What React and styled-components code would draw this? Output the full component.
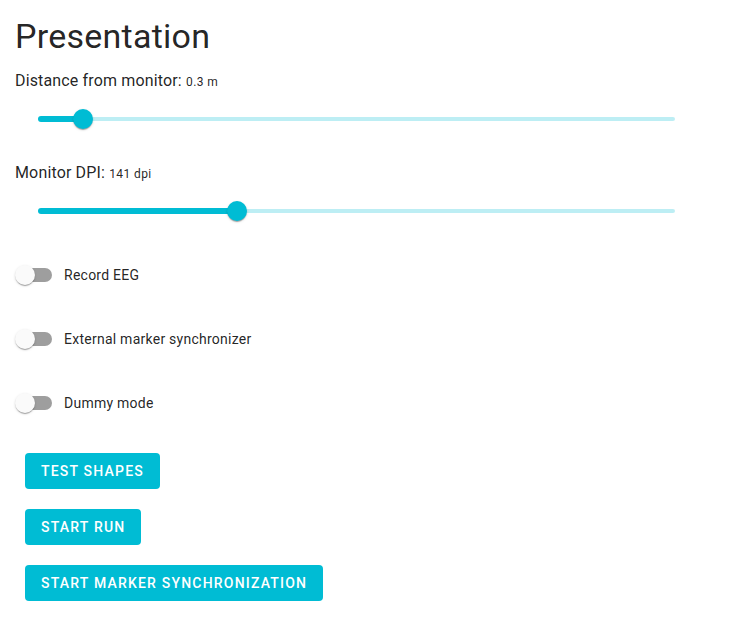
import { useState } from 'react';
import styled, { createGlobalStyle } from 'styled-components';

const GlobalStyle = createGlobalStyle`
  body {
    margin: 0;
    background: #fff;
    font-family: Roboto, 'Liberation Sans', sans-serif;
    color: rgba(0, 0, 0, 0.87);
  }
`;

const PRIMARY = '#00bcd4';

const Page = styled.div`
  padding: 15px 15px 24px;
  display: flex;
  flex-direction: column;
`;

const Title = styled.h1`
  margin: 0;
  font-size: 34px;
  line-height: 42px;
  font-weight: 400;
  letter-spacing: 0.25px;
`;

const Label = styled.div`
  margin-top: ${(p) => p.$top}px;
  font-size: 16px;
  line-height: 24px;
  letter-spacing: 0.15px;
`;

const Value = styled.span`
  font-size: 12px;
  letter-spacing: 0.4px;
`;

const SliderRoot = styled.div`
  position: relative;
  margin: 10px 0 0 24px;
  width: 636px;
  height: 30px;
  cursor: pointer;
`;

const Rail = styled.div`
  position: absolute;
  left: 0;
  right: 0;
  top: 13px;
  height: 4px;
  border-radius: 2px;
  background: rgba(0, 188, 212, 0.26);
`;

const Track = styled.div`
  position: absolute;
  left: -1px;
  top: 12px;
  height: 6px;
  border-radius: 3px;
  background: ${PRIMARY};
`;

const Thumb = styled.div`
  position: absolute;
  top: 5px;
  width: 20px;
  height: 20px;
  margin-left: -10px;
  border-radius: 50%;
  background: ${PRIMARY};
  box-shadow: 0 2px 1px -1px rgba(0, 0, 0, 0.2), 0 1px 1px 0 rgba(0, 0, 0, 0.14),
    0 1px 3px 0 rgba(0, 0, 0, 0.12);
`;

const SwitchList = styled.div`
  margin-top: 30px;
  display: flex;
  flex-direction: column;
  gap: 26px;
`;

const SwitchRow = styled.label`
  display: flex;
  align-items: center;
  margin-left: -9px;
  height: 38px;
  cursor: pointer;
`;

const SwitchBox = styled.span`
  position: relative;
  width: 58px;
  height: 38px;
  flex-shrink: 0;
`;

const SwitchTrack = styled.span`
  position: absolute;
  left: 11px;
  top: 12px;
  width: 35px;
  height: 14px;
  border-radius: 7px;
  background: ${(p) => (p.$on ? 'rgba(0, 188, 212, 0.5)' : 'rgba(0, 0, 0, 0.38)')};
`;

const SwitchThumb = styled.span`
  position: absolute;
  top: 9px;
  left: ${(p) => (p.$on ? 29 : 9)}px;
  width: 20px;
  height: 20px;
  border-radius: 50%;
  background: ${(p) => (p.$on ? PRIMARY : '#fafafa')};
  box-shadow: 0 2px 1px -1px rgba(0, 0, 0, 0.2), 0 1px 1px 0 rgba(0, 0, 0, 0.14),
    0 1px 3px 0 rgba(0, 0, 0, 0.12);
`;

const SwitchText = styled.span`
  margin-left: 0;
  font-size: 14px;
  line-height: 20px;
  letter-spacing: 0.25px;
`;

const ButtonList = styled.div`
  margin: 31px 0 0 10px;
  display: flex;
  flex-direction: column;
  align-items: flex-start;
  gap: 20px;
`;

const Button = styled.button`
  height: 36px;
  padding: 0 16px;
  border: none;
  border-radius: 4px;
  background: ${PRIMARY};
  color: #fff;
  font-family: Roboto, 'Liberation Sans', sans-serif;
  font-size: 14px;
  font-weight: 500;
  letter-spacing: 1.2px;
  text-transform: uppercase;
  cursor: pointer;
`;

const Slider = ({ value, min, max }) => {
  const pct = ((value - min) / (max - min)) * 100;
  return (
    <SliderRoot>
      <Rail />
      <Track style={{ width: `calc(${pct}% + 1px)` }} />
      <Thumb style={{ left: `${pct}%` }} />
    </SliderRoot>
  );
};

const Toggle = ({ label, on, onChange }) => (
  <SwitchRow onClick={onChange}>
    <SwitchBox>
      <SwitchTrack $on={on} />
      <SwitchThumb $on={on} />
    </SwitchBox>
    <SwitchText>{label}</SwitchText>
  </SwitchRow>
);

const App = () => {
  const [flags, setFlags] = useState({ eeg: false, marker: false, dummy: false });
  const toggle = (key) => setFlags((f) => ({ ...f, [key]: !f[key] }));

  return (
    <>
      <GlobalStyle />
      <Page>
        <Title>Presentation</Title>
        <Label $top={12}>
          Distance from monitor: <Value>0.3 m</Value>
        </Label>
        <Slider value={0.3} min={0.2} max={1.65} />
        <Label $top={27}>
          Monitor DPI: <Value>141 dpi</Value>
        </Label>
        <Slider value={141} min={50} max={343} />
        <SwitchList>
          <Toggle label='Record EEG' on={flags.eeg} onChange={() => toggle('eeg')} />
          <Toggle
            label='External marker synchronizer'
            on={flags.marker}
            onChange={() => toggle('marker')}
          />
          <Toggle label='Dummy mode' on={flags.dummy} onChange={() => toggle('dummy')} />
        </SwitchList>
        <ButtonList>
          <Button>Test shapes</Button>
          <Button>Start run</Button>
          <Button>Start marker synchronization</Button>
        </ButtonList>
      </Page>
    </>
  );
};

export default App;
